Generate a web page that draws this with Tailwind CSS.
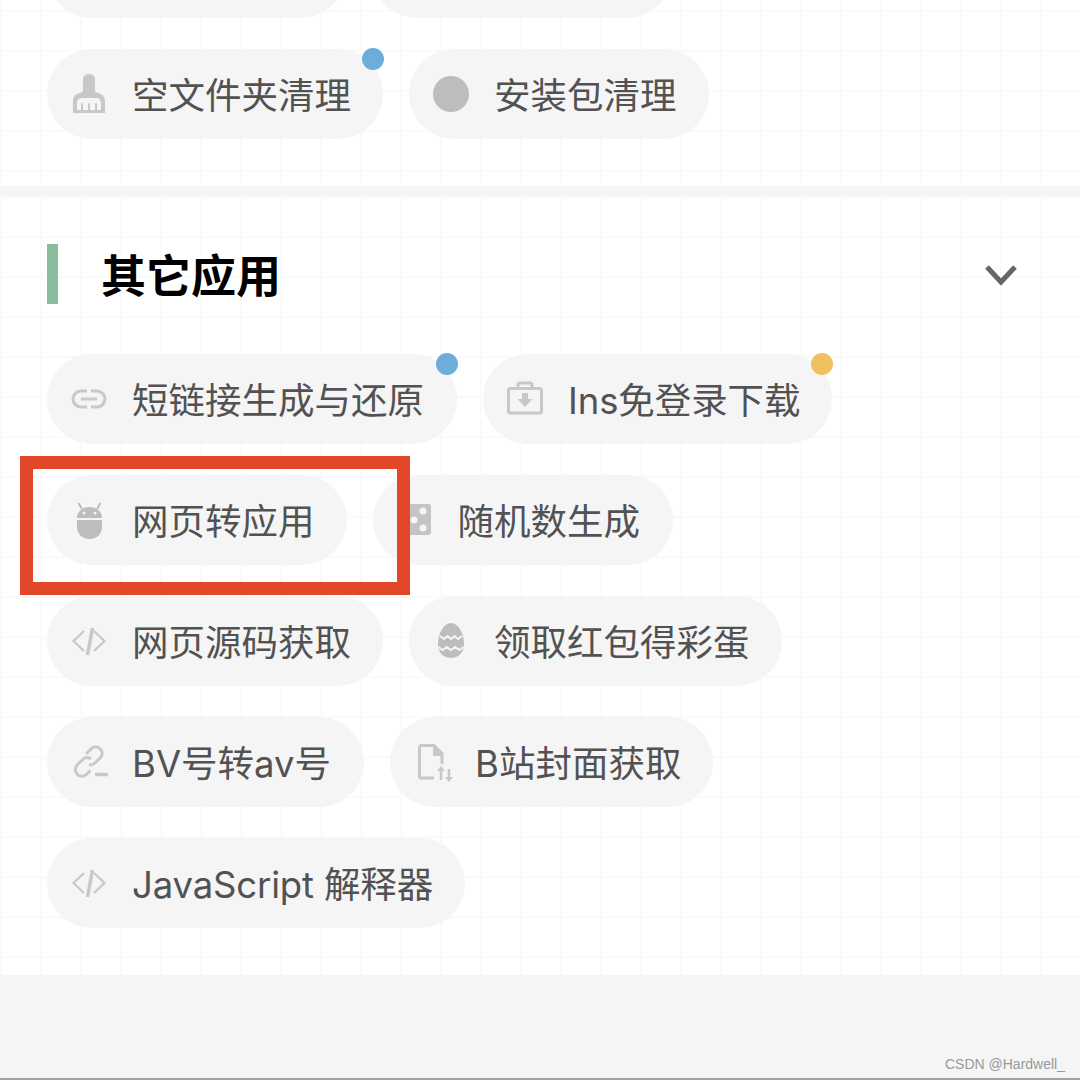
<!DOCTYPE html>
<html lang="zh-CN">

<head>
    <meta charset="UTF-8">
    <title>其它应用</title>
    <script src="https://cdn.jsdelivr.net/npm/@tailwindcss/browser@4"></script>
</head>

<body class="bg-[#f5f5f5]">
    <div class="relative w-[1080px] h-[1080px] overflow-hidden flex flex-col font-[Inter,'Noto_Sans_CJK_SC',sans-serif]">

        <!-- 上一个分组（只露出底部） -->
        <section class="mt-[-110px] h-[296px] shrink-0 bg-white bg-[linear-gradient(to_right,#fafafa_2px,transparent_2px),linear-gradient(to_bottom,#fafafa_2px,transparent_2px)] bg-[size:40px_40px] pt-[38px] pl-[47px] pr-[63px]">
            <div class="flex flex-wrap gap-x-[26px] gap-y-[31px]">
                <div class="w-[299px] h-[90px] rounded-full bg-[#f5f5f5]"></div>
                <div class="w-[300px] h-[90px] rounded-full bg-[#f5f5f5]"></div>

                <div class="relative h-[90px] rounded-full bg-[#f5f5f5] pl-6 pr-8 flex items-center gap-[25px]">
                    <svg class="w-9 h-10 shrink-0" viewBox="0 0 36 40" fill="#c8c8c8">
                        <path fill-rule="evenodd" d="M12 5a6 5 0 0 1 12 0v11c0 2 1 2.500 3 3 5 1 7 4 7 9v11H2V28c0-5 2-8 7-9 2-.5 3-1 3-3ZM6 36h4v-6a1 1 0 0 1 2 0v6h5v-6a1 1 0 0 1 2 0v6h5v-6a1 1 0 0 1 2 0v6h4v-7c0-3-2-5-5-5H11c-3 0-5 2-5 5Z" />
                    </svg>
                    <span class="pt-1 text-[36.5px] leading-none text-[#525252]">空文件夹清理</span>
                    <span class="absolute right-[-1px] top-[-1px] w-[22px] h-[22px] rounded-full bg-[#6cadd9]"></span>
                </div>
                <div class="h-[90px] rounded-full bg-[#f5f5f5] pl-6 pr-8 flex items-center gap-[25px]">
                    <svg class="w-9 h-10 shrink-0" viewBox="0 0 36 40" fill="#bdbdbd">
                        <circle cx="18" cy="20" r="18" />
                    </svg>
                    <span class="pt-1 text-[36.5px] leading-none text-[#525252]">安装包清理</span>
                </div>
            </div>
        </section>

        <div class="h-[10px] shrink-0"></div>

        <!-- 其它应用 -->
        <section class="h-[779px] shrink-0 bg-white bg-[linear-gradient(to_right,#fafafa_2px,transparent_2px),linear-gradient(to_bottom,#fafafa_2px,transparent_2px)] bg-[size:40px_40px] pt-12 pl-[47px] pr-[63px]">
            <div class="flex items-center h-[60px] mb-[50px]">
                <div class="w-[11px] h-[60px] bg-[#8abd9c]"></div>
                <h2 class="ml-[43px] pt-1 text-[45px] leading-none font-bold text-black">其它应用</h2>
                <svg class="ml-auto w-8 h-6" viewBox="0 0 32 24" fill="none" stroke="#666" stroke-width="5">
                    <path d="M2 5l14 15L30 5" />
                </svg>
            </div>

            <div class="flex flex-wrap gap-x-[26px] gap-y-[31px]">
                <div class="relative h-[90px] rounded-full bg-[#f5f5f5] pl-6 pr-[33px] flex items-center gap-[25px]">
                    <svg class="w-9 h-10 shrink-0" viewBox="0 0 36 40" fill="none" stroke="#c8c8c8" stroke-width="3">
                        <path d="M16 12H10a8 8 0 0 0 0 16h6M20 12h6a8 8 0 0 1 0 16h-6M10 20h16" />
                    </svg>
                    <span class="pt-1 text-[36.5px] leading-none text-[#525252]">短链接生成与还原</span>
                    <span class="absolute right-[-1px] top-[-1px] w-[22px] h-[22px] rounded-full bg-[#6cadd9]"></span>
                </div>
                <div class="relative h-[90px] rounded-full bg-[#f5f5f5] pl-6 pr-8 flex items-center gap-[25px]">
                    <svg class="w-9 h-10 shrink-0" viewBox="0 0 36 40" fill="none" stroke="#c8c8c8" stroke-width="3">
                        <path d="M11 9V5.500a1.500 1.500 0 0 1 1.500-1.500h11A1.500 1.500 0 0 1 25 5.500V9" />
                        <rect x="1.500" y="9.500" width="33" height="24.500" rx="2" />
                        <path fill="#c8c8c8" stroke="none" d="M15 14h6v6h4.500L18 28l-7.500-8H15Z" />
                    </svg>
                    <span class="pt-1 text-[36.5px] leading-none tracking-[-0.1px] text-[#525252]">Ins免登录下载</span>
                    <span class="absolute right-[-1px] top-[-1px] w-[22px] h-[22px] rounded-full bg-[#edc25e]"></span>
                </div>

                <div class="h-[90px] rounded-full bg-[#f5f5f5] pl-6 pr-8 flex items-center gap-[25px]">
                    <svg class="w-9 h-10 shrink-0" viewBox="0 0 36 40" fill="#bdbdbd">
                        <path d="M6 18c0-6 5-11 12.500-11S31 12 31 18Z" />
                        <path d="M6 20h25v7c0 7-5 12-12.500 12S6 34 6 27Z" />
                        <path d="M11 9L7.500 3M26 9l3.500-6" fill="none" stroke="#bdbdbd" stroke-width="2" />
                        <circle cx="13" cy="13" r="1.500" fill="#f5f5f5" />
                        <circle cx="24" cy="13" r="1.500" fill="#f5f5f5" />
                    </svg>
                    <span class="pt-1 text-[36.5px] leading-none text-[#525252]">网页转应用</span>
                </div>
                <div class="h-[90px] rounded-full bg-[#f5f5f5] pl-6 pr-[33px] flex items-center gap-[25px]">
                    <svg class="w-9 h-10 shrink-0" viewBox="0 0 36 40" fill="#c4c4c4">
                        <rect x="1" y="4" width="33" height="31" rx="3" />
                        <g fill="#f5f5f5">
                            <circle cx="8" cy="11" r="3.500" />
                            <circle cx="26" cy="11" r="3.500" />
                            <circle cx="17" cy="20" r="3.500" />
                            <circle cx="8" cy="28" r="3.500" />
                            <circle cx="26" cy="28" r="3.500" />
                        </g>
                    </svg>
                    <span class="pt-1 text-[36.5px] leading-none text-[#525252]">随机数生成</span>
                </div>

                <div class="h-[90px] rounded-full bg-[#f5f5f5] pl-6 pr-8 flex items-center gap-[25px]">
                    <svg class="w-9 h-10 shrink-0" viewBox="0 0 36 40" fill="none" stroke="#c8c8c8" stroke-width="2.200">
                        <path d="M13 10L2.500 20 13 30M23 10l10.500 10L23 30" />
                        <path d="M21.500 7l-5 27" stroke-width="3.500" />
                    </svg>
                    <span class="pt-1 text-[36.5px] leading-none text-[#525252]">网页源码获取</span>
                </div>
                <div class="h-[90px] rounded-full bg-[#f5f5f5] pl-6 pr-8 flex items-center gap-[25px]">
                    <svg class="w-9 h-10 shrink-0" viewBox="0 0 36 40" fill="#bdbdbd">
                        <path d="M18 2c7 0 13 10 13 21 0 9-6 14-13 14S5 32 5 23C5 12 11 2 18 2Z" />
                        <path d="M7 15l4 3 3.500-3 3.500 3 3.500-3 3.500 3 4-3M5.500 26l4.200 3 4.200-3 4.100 3 4.100-3 4.200 3 4.200-3" fill="none" stroke="#f5f5f5" stroke-width="2" />
                    </svg>
                    <span class="pt-1 text-[36.5px] leading-none text-[#525252]">领取红包得彩蛋</span>
                </div>

                <div class="h-[90px] rounded-full bg-[#f5f5f5] pl-6 pr-[33px] flex items-center gap-[25px]">
                    <svg class="w-9 h-10 shrink-0 overflow-visible" viewBox="0 0 36 40" fill="none" stroke="#c8c8c8" stroke-width="3">
                        <path d="M15 12l6-6a6.500 6.500 0 0 1 9 9l-6 6a6.500 6.500 0 0 1-6 1.500" />
                        <path d="M20 17a6.500 6.500 0 0 0-6.500-1l-7 6.500a6.500 6.500 0 0 0 9 10l4-4" />
                        <path d="M24 32.500h13" stroke-width="3.500" />
                    </svg>
                    <span class="pt-1 text-[36.5px] leading-none text-[#525252]">BV号转av号</span>
                </div>
                <div class="h-[90px] rounded-full bg-[#f5f5f5] pl-6 pr-8 flex items-center gap-[25px]">
                    <svg class="w-9 h-10 shrink-0 overflow-visible" viewBox="0 0 36 40" fill="none" stroke="#c8c8c8" stroke-width="3">
                        <path d="M20 36H7.500a2 2 0 0 1-2-2V5.500a2 2 0 0 1 2-2H20l8 8V22" />
                        <path fill="#c8c8c8" stroke="none" d="M19 3l10 9.500V14H19Z" />
                        <path d="M27 38V27M35 27v11" stroke-width="2.500" />
                        <path fill="#c8c8c8" stroke="none" d="M27 24l4 5h-8ZM35 40l-4-5h8Z" />
                    </svg>
                    <span class="pt-1 text-[36.5px] leading-none text-[#525252]">B站封面获取</span>
                </div>

                <div class="h-[90px] rounded-full bg-[#f5f5f5] pl-6 pr-8 flex items-center gap-[25px]">
                    <svg class="w-9 h-10 shrink-0" viewBox="0 0 36 40" fill="none" stroke="#c8c8c8" stroke-width="2.200">
                        <path d="M13 10L2.500 20 13 30M23 10l10.500 10L23 30" />
                        <path d="M21.500 7l-5 27" stroke-width="3.500" />
                    </svg>
                    <span class="pt-1 text-[36.5px] leading-none tracking-[-0.15px] text-[#525252]">JavaScript 解释器</span>
                </div>
            </div>
        </section>

        <!-- 底部留白 -->
        <div class="flex-1 border-b-2 border-[#a0a0a0]"></div>

        <!-- 截图上的标注 -->
        <div class="absolute left-5 top-[456px] w-[390px] h-[139px] border-[13px] border-[#e2472a]"></div>
        <div class="absolute right-[15px] bottom-[9px] text-[14px] leading-none text-[#999] font-['Liberation_Sans',sans-serif]">CSDN @Hardwell_</div>
    </div>
</body>

</html>
